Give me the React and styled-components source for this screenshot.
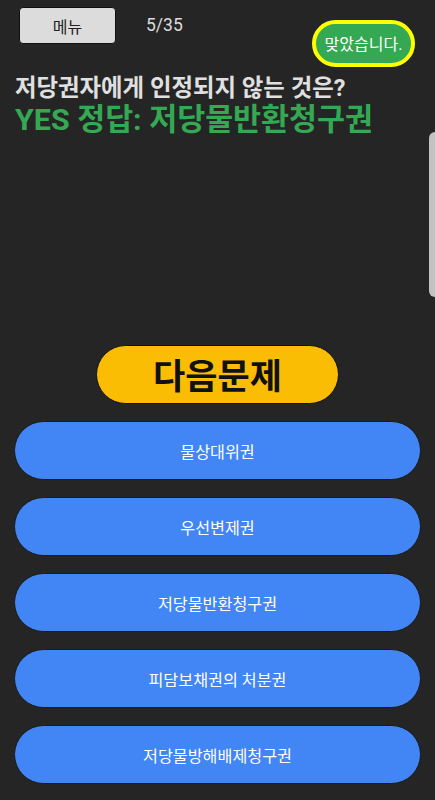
import React from "react";
import styled, { createGlobalStyle } from "styled-components";

const Global = createGlobalStyle`
  html, body { margin: 0; padding: 0; background: #252525; }
  body { font-family: Roboto, "Noto Sans CJK KR", "Noto Sans", sans-serif; overflow: hidden; }
  * { box-sizing: border-box; }
`;

const Page = styled.div`
  width: 435px;
  height: 800px;
  background: #252525;
  display: flex;
  flex-direction: column;
  position: relative;
  overflow: hidden;
`;

const Header = styled.div`
  display: flex;
  align-items: flex-start;
  height: 67px;
`;

const MenuButton = styled.button`
  margin: 7px 0 0 19px;
  width: 97px;
  height: 37px;
  background: #dcdcdc;
  border: 1px solid #111;
  border-radius: 4px;
  font-family: Roboto, "Noto Sans CJK KR", sans-serif;
  font-size: 16px;
  color: #222;
  padding: 0;
`;

const Counter = styled.div`
  margin: 15px 0 0 30px;
  font-size: 17.5px;
  color: #dcdcdc;
  line-height: 20px;
`;

const Badge = styled.div`
  margin: 20px 20px 0 auto;
  width: 103px;
  height: 47px;
  border: 4px solid #ffff00;
  border-radius: 24px;
  background: #34a853;
  color: #fff;
  font-size: 16px;
  display: flex;
  align-items: center;
  justify-content: center;
  padding-bottom: 2px;
  white-space: nowrap;
`;

const Question = styled.div`
  margin: 8px 0 0 15px;
  font-size: 23.4px;
  font-weight: 700;
  color: #e0e0e0;
  line-height: 26px;
  white-space: nowrap;
`;

const Answer = styled.div`
  margin: 2px 0 0 15px;
  font-size: 30.4px;
  font-weight: 700;
  color: #34a853;
  line-height: 34px;
  white-space: nowrap;
`;

const NextButton = styled.button`
  align-self: center;
  margin-top: 208px;
  width: 243px;
  height: 59px;
  border-radius: 30px;
  background: #fbbc04;
  border: 1px solid #111;
  font-family: Roboto, "Noto Sans CJK KR", sans-serif;
  font-size: 35px;
  font-weight: 700;
  color: #111;
  padding: 0 0 2px;
`;

const Options = styled.div`
  display: flex;
  flex-direction: column;
  gap: 17px;
  margin: 17px 14px 0;
`;

const Option = styled.button`
  height: 59px;
  border-radius: 30px;
  background: #4285f4;
  border: 1px solid #1a1a1a;
  color: #fff;
  font-family: Roboto, "Noto Sans CJK KR", sans-serif;
  font-size: 16.2px;
  padding: 0;
`;

const ScrollThumb = styled.div`
  position: absolute;
  right: -6px;
  top: 132px;
  width: 12px;
  height: 165px;
  border-radius: 6px;
  background: #c2c2c2;
`;

const options = ["물상대위권", "우선변제권", "저당물반환청구권", "피담보채권의 처분권", "저당물방해배제청구권"];

export default function App() {
  return (
    <>
      <Global />
      <Page>
        <Header>
          <MenuButton>메뉴</MenuButton>
          <Counter>5/35</Counter>
          <Badge>맞았습니다.</Badge>
        </Header>
        <Question>저당권자에게 인정되지 않는 것은?</Question>
        <Answer>YES 정답: 저당물반환청구권</Answer>
        <NextButton>다음문제</NextButton>
        <Options>
          {options.map((o) => (
            <Option key={o}>{o}</Option>
          ))}
        </Options>
        <ScrollThumb />
      </Page>
    </>
  );
}
